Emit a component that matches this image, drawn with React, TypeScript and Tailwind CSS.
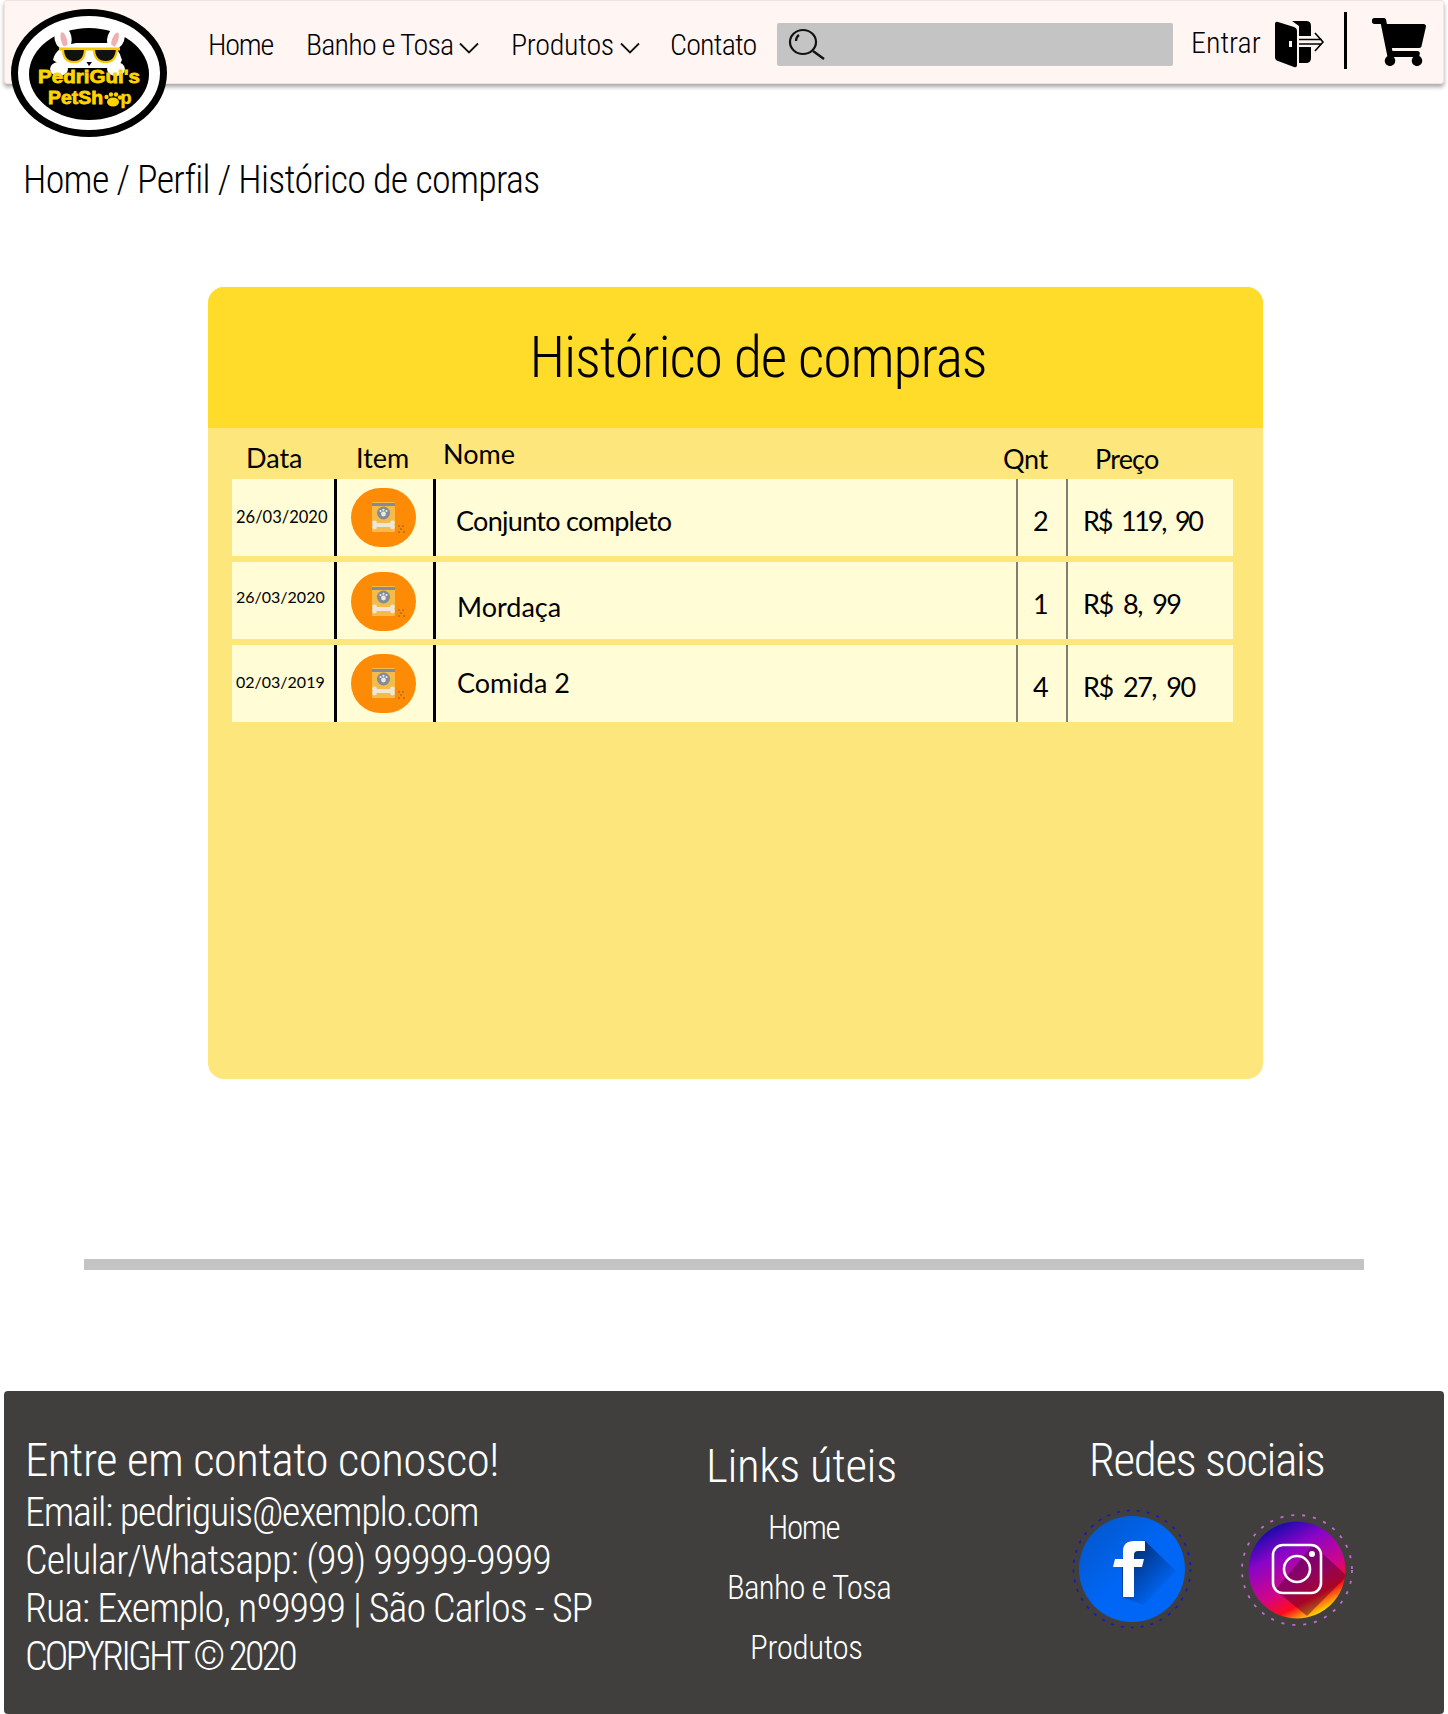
import { FaShoppingCart } from 'react-icons/fa';

const displayFont = "font-['Liberation_Sans_Narrow','Roboto_Condensed','Liberation_Sans',sans-serif]";

const purchases = [
  {
    date: '26/03/2020',
    dateClass: 'pt-[28px] text-[16.5px]',
    name: 'Conjunto completo',
    nameClass: 'pt-[26px] pl-[20px] tracking-[-0.7px]',
    qty: '2',
    qtyClass: 'pt-[26px] pl-[15px]',
    price: 'R$ 119, 90',
    priceClass: 'pt-[26px] tracking-[-2.2px] [word-spacing:5px]',
    rowClass: 'mb-[6px] h-[77px]',
    iconClass: 'mt-[9px]',
  },
  {
    date: '26/03/2020',
    dateClass: 'pt-[25px] text-[16px]',
    name: 'Mordaça',
    nameClass: 'pt-[29px] pl-[21px]',
    qty: '1',
    qtyClass: 'pt-[26px] pl-[15px]',
    price: 'R$ 8, 99',
    priceClass: 'pt-[26px] tracking-[-1.5px] [word-spacing:5px]',
    rowClass: 'mb-[6px] h-[77px]',
    iconClass: 'mt-[10px]',
  },
  {
    date: '02/03/2019',
    dateClass: 'pt-[27px] text-[16px]',
    name: 'Comida 2',
    nameClass: 'pt-[22px] pl-[21px]',
    qty: '4',
    qtyClass: 'pt-[26px] pl-[15px]',
    price: 'R$ 27, 90',
    priceClass: 'pt-[26px] tracking-[-1.5px] [word-spacing:5px]',
    rowClass: 'h-[77px]',
    iconClass: 'mt-[9px]',
  },
];

const Chevron = () => (
  <svg width="20" height="12" viewBox="0 0 20 12" className="ml-[6px] mt-[6px]" fill="none" stroke="#111" strokeWidth="1.8">
    <path d="M1 1.5 L10 10.5 L19 1.5" />
  </svg>
);

const Logo = () => (
  <svg width="158" height="130" viewBox="0 0 158 130" className="absolute left-[10px] top-[8px]">
    <ellipse cx="79" cy="65" rx="78" ry="64" fill="#000" />
    <ellipse cx="79" cy="65" rx="71" ry="57" fill="#fff" />
    <ellipse cx="79" cy="66" rx="60" ry="46" fill="#000" />
    <ellipse cx="53" cy="30" rx="8.5" ry="12" fill="#fff" transform="rotate(-15 53 30)" />
    <ellipse cx="54" cy="32" rx="3" ry="8" fill="#eeb0b0" transform="rotate(-15 54 32)" />
    <ellipse cx="106" cy="30" rx="8.5" ry="12" fill="#fff" transform="rotate(20 106 30)" />
    <ellipse cx="105" cy="32" rx="3" ry="8" fill="#eeb0b0" transform="rotate(20 105 32)" />
    <path d="M43 52 Q46 38 66 35 L98 35 Q108 38 112 52 L108 60 L55 60 Z" fill="#fff" />
    <ellipse cx="49" cy="61" rx="9" ry="7" fill="#fff" />
    <ellipse cx="106" cy="61" rx="9" ry="7" fill="#fff" />
    <path d="M49 41 H110" stroke="#f6c800" strokeWidth="3" />
    <path d="M53 41 H75 Q75 54 64 54 Q53 54 53 41 Z" fill="#111" stroke="#f6c800" strokeWidth="2.2" />
    <path d="M84 41 H107 Q106 54 96 54 Q84 54 84 41 Z" fill="#111" stroke="#f6c800" strokeWidth="2.2" />
    <path d="M76.5 54 H82 L79 58 Z" fill="#000" />
    <text x="79" y="75" textAnchor="middle" fontFamily="Liberation Sans" fontWeight="700" fontSize="18" fill="#fdd300" stroke="#fdd300" strokeWidth=".8" textLength="102" lengthAdjust="spacingAndGlyphs">PedriGui's</text>
    <text x="65.5" y="96" textAnchor="middle" fontFamily="Liberation Sans" fontWeight="700" fontSize="18" fill="#fdd300" stroke="#fdd300" strokeWidth=".8" textLength="55" lengthAdjust="spacingAndGlyphs">PetSh</text>
    <text x="116" y="96" textAnchor="middle" fontFamily="Liberation Sans" fontWeight="700" fontSize="18" fill="#fdd300" stroke="#fdd300" strokeWidth=".5">p</text>
    <g fill="#fdd300">
      <ellipse cx="103" cy="94" rx="6" ry="4.5" />
      <circle cx="96.5" cy="89" r="2.2" />
      <circle cx="101" cy="86.5" r="2.2" />
      <circle cx="106" cy="86.5" r="2.2" />
      <circle cx="110" cy="89.5" r="2.2" />
    </g>
  </svg>
);

const DoorIcon = () => (
  <svg width="52" height="48" viewBox="0 0 52 48" className="ml-[12px] mt-[4px]">
    <path d="M2 4 Q2 1 5 2 L21 7 Q24 8 24 11 V45 Q24 48 21 47 L5 41 Q2 40 2 37 Z" fill="#000" />
    <path d="M19 1 H33 Q38 1 38 6 V16 H26 V6 Z M26 27 H38 V38 Q38 43 33 43 H26 Z" fill="#000" />
    <rect x="16" y="21" width="3" height="6" fill="#fff5f3" />
    <path d="M26 19.5 H49 M26 24 H49 M42 13 L50 22 L42 31" fill="none" stroke="#000" strokeWidth="1.6" />
  </svg>
);

const FoodBag = ({ className }: { className: string }) => (
  <div className={`${className} ml-[14px] flex h-[59px] w-[65px] items-center justify-center rounded-full bg-[#fd8b05]`}>
    <svg width="42" height="36" viewBox="0 0 42 36" className="ml-[10px]">
      <rect x="4" y="2" width="23" height="30" rx="1" fill="#f5bb4a" />
      <rect x="4" y="3" width="23" height="3" fill="#858b96" />
      <circle cx="15.5" cy="13" r="6.5" fill="#858b96" />
      <circle cx="15.5" cy="14" r="2.4" fill="#e8e8e8" />
      <circle cx="12.5" cy="11" r="1.1" fill="#e8e8e8" />
      <circle cx="15.5" cy="9.8" r="1.1" fill="#e8e8e8" />
      <circle cx="18.5" cy="11" r="1.1" fill="#e8e8e8" />
      <path d="M7 25 H24" stroke="#eee7d8" strokeWidth="4" strokeLinecap="round" />
      <circle cx="6.5" cy="23" r="2.4" fill="#eee7d8" />
      <circle cx="6.5" cy="27" r="2.4" fill="#eee7d8" />
      <circle cx="24.5" cy="23" r="2.4" fill="#eee7d8" />
      <circle cx="24.5" cy="27" r="2.4" fill="#eee7d8" />
      <g fill="#b06c1c">
        <circle cx="31" cy="26" r="1" />
        <circle cx="35" cy="26" r="1" />
        <circle cx="33" cy="29" r="1" />
        <circle cx="31" cy="32" r="1" />
        <circle cx="36" cy="32" r="1" />
      </g>
    </svg>
  </div>
);

const FacebookIcon = () => (
  <svg width="120" height="120" viewBox="0 0 120 120" className="shrink-0">
    <defs>
      <linearGradient id="fbShadow" x1="0.15" y1="0.1" x2="0.75" y2="0.8">
        <stop offset="0" stopColor="#002a6e" />
        <stop offset="1" stopColor="#0066f5" />
      </linearGradient>
      <linearGradient id="fbBase" x1="0" y1="0" x2="1" y2="1">
        <stop offset="0" stopColor="#0454c4" />
        <stop offset="0.5" stopColor="#0066f5" />
      </linearGradient>
      <clipPath id="fbClip">
        <circle cx="60" cy="60" r="53" />
      </clipPath>
    </defs>
    <circle cx="60" cy="60" r="58.5" fill="none" stroke="#1414c8" strokeWidth="1.6" strokeDasharray="3 7" />
    <circle cx="60" cy="60" r="53" fill="url(#fbBase)" />
    <path d="M72 31 L104 62 L72 96 L50 88 L50 50 Z" fill="url(#fbShadow)" clipPath="url(#fbClip)" />
    <path d="M51 88 V58 H41 L43 50 H51 V42 Q51 32 62 32 H73 V42 H66 Q62 42 62 46 V50 H72 L70 58 H62 V88 Z" fill="#fff" />
  </svg>
);

const InstagramIcon = () => (
  <svg width="112" height="112" viewBox="0 0 112 112" className="ml-[49px] mt-[5px] shrink-0">
    <defs>
      <linearGradient id="igBase" x1="0.22" y1="0.03" x2="0.72" y2="0.97">
        <stop offset="0" stopColor="#0a0aa8" />
        <stop offset="0.3" stopColor="#8a05c8" />
        <stop offset="0.62" stopColor="#d0058a" />
        <stop offset="0.82" stopColor="#ff0a1e" />
        <stop offset="1" stopColor="#fff000" />
      </linearGradient>
      <clipPath id="igClip">
        <circle cx="56" cy="56" r="48.5" />
      </clipPath>
    </defs>
    <circle cx="56" cy="56" r="55" fill="none" stroke="#c46ad0" strokeWidth="1.8" strokeDasharray="3 8" />
    <circle cx="56" cy="56" r="48.5" fill="url(#igBase)" />
    <path d="M72 31 L106 62 L66 102 L34 76 Z" fill="#40002c" opacity=".45" clipPath="url(#igClip)" />
    <rect x="32" y="31" width="48" height="48" rx="10" fill="none" stroke="#fff" strokeWidth="2.6" />
    <circle cx="56" cy="55" r="13" fill="none" stroke="#fff" strokeWidth="2.6" />
    <circle cx="71" cy="40" r="3" fill="#fff" />
  </svg>
);

export default function App() {
  return (
    <div className={`relative h-[1714px] w-[1448px] overflow-hidden bg-white text-black ${displayFont}`}>
      {/* Top bar */}
      <header className="mx-[4px] flex h-[84px] items-center rounded-[3px] border border-[#f3e2e0] bg-[#fff5f3] pl-[203px] shadow-[0_3px_4px_rgba(0,0,0,0.35)]">
        <nav className="mt-[6px] flex items-center text-[30px] font-light leading-none">
          <a className="w-[98px] tracking-[-1.2px]">Home</a>
          <a className="flex w-[205px] items-center tracking-[-0.8px]">Banho e Tosa<Chevron /></a>
          <a className="flex w-[159px] items-center tracking-[-0.3px]">Produtos<Chevron /></a>
          <a className="w-[107px] tracking-[-0.8px]">Contato</a>
        </nav>
        <div className="mt-[4px] flex h-[43px] w-[396px] items-center rounded-[2px] bg-[#c4c4c4] pl-[11px]">
          <svg width="38" height="32" viewBox="0 0 38 32" fill="none" stroke="#111" strokeWidth="2.2">
            <ellipse cx="15" cy="14" rx="13" ry="12" />
            <path d="M25 23 L36 31" strokeWidth="2.4" />
            <path d="M8 13 Q8 9 11 7" />
          </svg>
        </div>
        <span className="ml-[18px] mt-[2px] text-[30px] font-light leading-none">Entrar</span>
        <DoorIcon />
        <div className="ml-[19px] mt-[-4px] h-[57px] w-[3px] bg-black" />
        <FaShoppingCart className="ml-[25px] text-[54px] text-black" />
      </header>

      <Logo />

      {/* Breadcrumb */}
      <p className="ml-[23px] mt-[74px] text-[38px] font-light leading-[44px] tracking-[-0.7px]">Home / Perfil / Histórico de compras</p>

      {/* Purchase history card */}
      <section className="ml-[208px] mt-[85px] h-[792px] w-[1055px] overflow-hidden rounded-[16px] bg-[#fde67c]">
        <h1 className="flex h-[141px] items-center justify-center bg-[#ffdc2a] pl-[45px] text-[58px] font-light tracking-[-1.2px]">Histórico de compras</h1>
        <div className="flex h-[51px] font-['Lato',sans-serif] text-[27px] leading-[32px]">
          <span className="ml-[38px] mt-[14px] w-[110px]">Data</span>
          <span className="mt-[14px] w-[87px]">Item</span>
          <span className="mt-[10px] w-[560px]">Nome</span>
          <span className="mt-[15px] w-[92px] tracking-[-0.3px]">Qnt</span>
          <span className="mt-[15px] tracking-[-0.8px]">Preço</span>
        </div>
        <div className="mx-[24px] w-[1001px] font-['Lato',sans-serif]">
          {purchases.map((p) => (
            <div key={p.name} className={`flex bg-[#fffcd6] ${p.rowClass}`}>
              <div className={`w-[102px] pl-[4px] leading-[20px] ${p.dateClass}`}>{p.date}</div>
              <div className="w-[99px] border-l-[3px] border-black">
                <FoodBag className={p.iconClass} />
              </div>
              <div className={`w-[583px] border-l-[3px] border-black text-[27px] leading-[32px] ${p.nameClass}`}>{p.name}</div>
              <div className={`w-[50px] border-l-[2px] border-[#808070] text-[27px] leading-[32px] ${p.qtyClass}`}>{p.qty}</div>
              <div className={`border-l-[2px] border-[#808070] pl-[15px] text-[27px] leading-[32px] ${p.priceClass}`}>{p.price}</div>
            </div>
          ))}
        </div>
      </section>

      <div className="ml-[84px] mt-[180px] h-[11px] w-[1280px] bg-[#c4c4c4]" />

      {/* Footer */}
      <footer className="mx-[4px] mt-[121px] flex h-[323px] rounded-[4px] bg-[#403f3e] font-light text-white">
        <div className="w-[640px] pl-[21px] pt-[42px] text-[40px] leading-[48px]">
          <h2 className="mb-[2px] text-[47px] leading-[54px] tracking-[-0.6px]">Entre em contato conosco!</h2>
          <p className="tracking-[-1.2px]">Email: pedriguis@exemplo.com</p>
          <p className="tracking-[-0.8px]">Celular/Whatsapp: (99) 99999-9999</p>
          <p className="tracking-[-1px]">Rua: Exemplo, nº9999 | São Carlos - SP</p>
          <p className="tracking-[-2.9px]">COPYRIGHT © 2020</p>
        </div>
        <div className="w-[300px] pl-[62px] pt-[48px] text-[33px] leading-[40px]">
          <h2 className="text-[47px] leading-[54px] tracking-[-0.4px]">Links úteis</h2>
          <ul className="mt-[15px]">
            <li className="ml-[62px] h-[60px] tracking-[-1.4px]">Home</li>
            <li className="ml-[21px] h-[60px] tracking-[-0.7px]">Banho e Tosa</li>
            <li className="ml-[44px] tracking-[-0.4px]">Produtos</li>
          </ul>
        </div>
        <div className="pl-[133px] pt-[42px]">
          <h2 className="ml-[12px] text-[47px] leading-[54px] tracking-[-1.25px]">Redes sociais</h2>
          <div className="ml-[-5px] mt-[22px] flex">
            <FacebookIcon />
            <InstagramIcon />
          </div>
        </div>
      </footer>
    </div>
  );
}
